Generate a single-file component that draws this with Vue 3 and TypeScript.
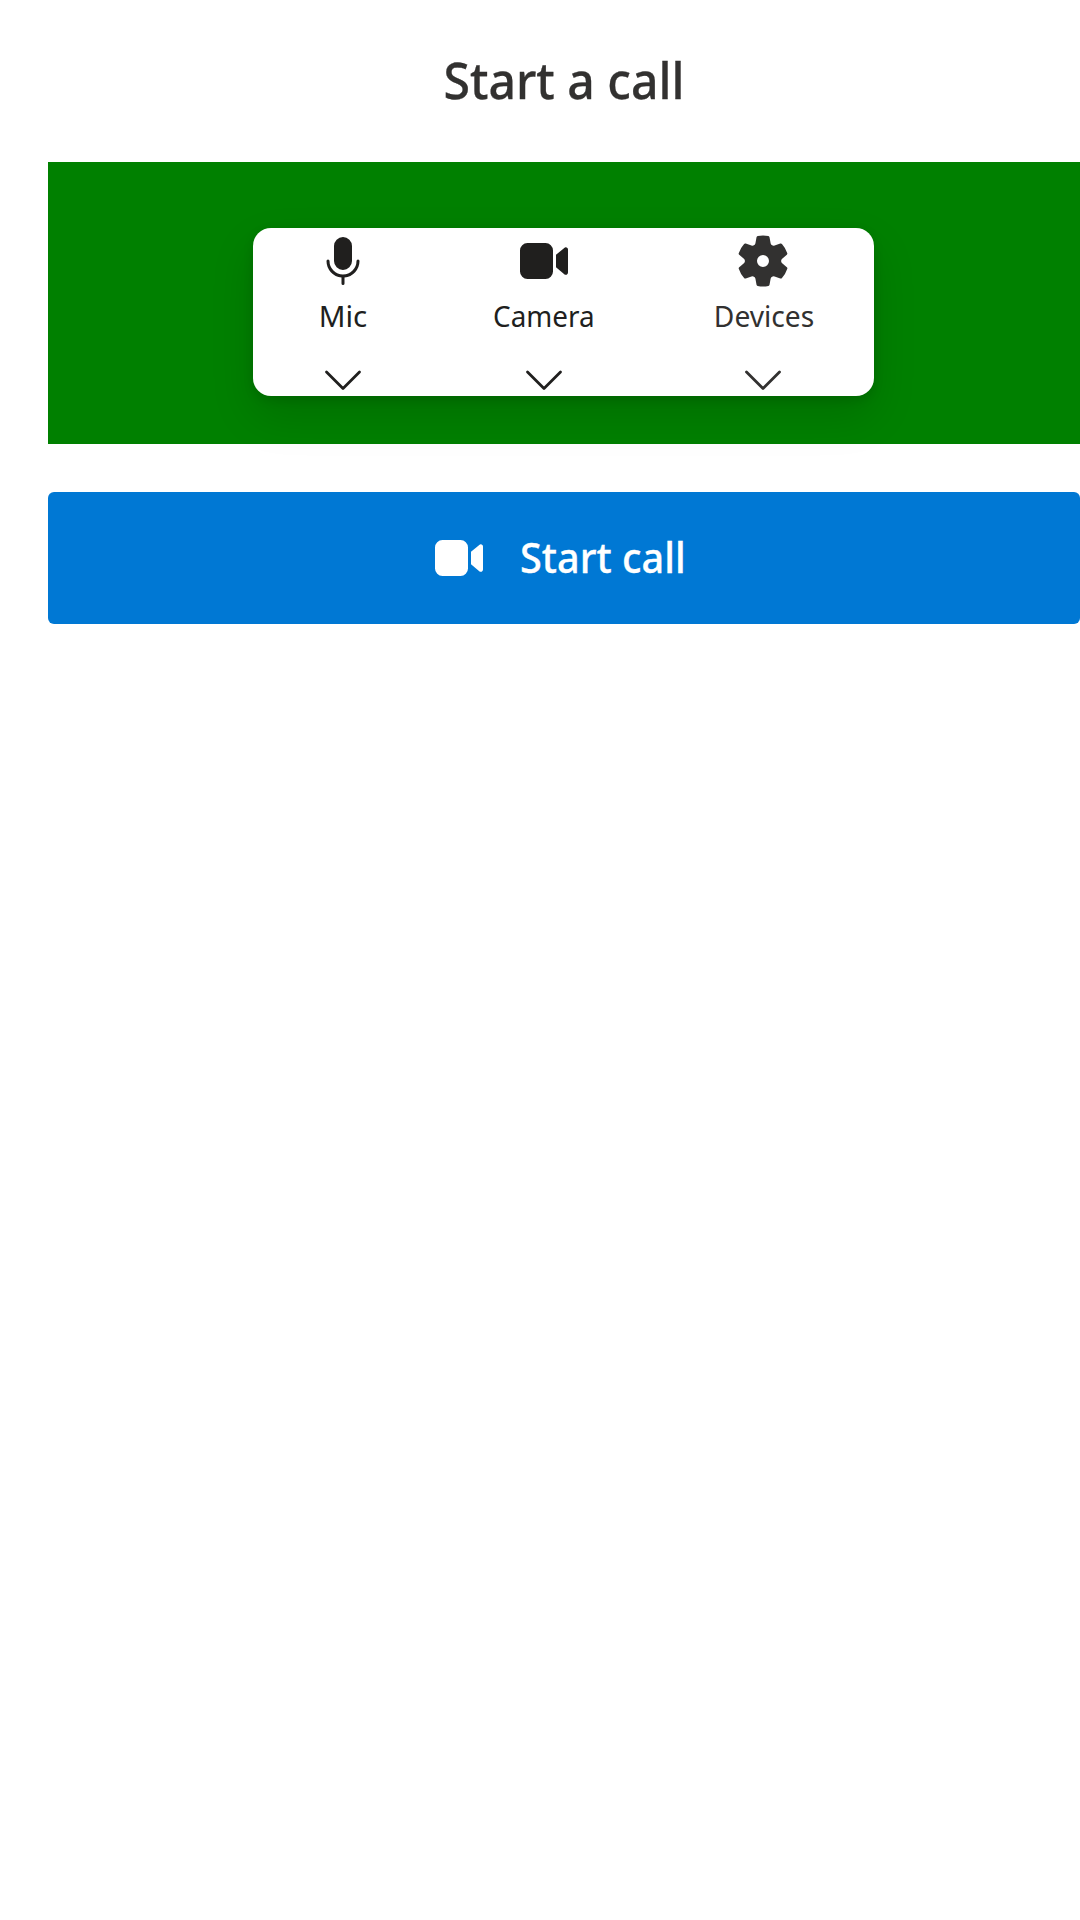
<script setup lang="ts">
interface DeviceControl {
  id: 'mic' | 'camera' | 'devices'
  label: string
}

const controls: DeviceControl[] = [
  { id: 'mic', label: 'Mic' },
  { id: 'camera', label: 'Camera' },
  { id: 'devices', label: 'Devices' },
]

const icons: Record<DeviceControl['id'], string> = {
  mic: 'M10 2a3 3 0 0 1 3 3v5a3 3 0 0 1-6 0V5a3 3 0 0 1 3-3ZM5.5 10a.5.5 0 0 0-1 0 5.5 5.5 0 0 0 5 5.48v2.02a.5.5 0 0 0 1 0v-2.02a5.5 5.5 0 0 0 5-5.48.5.5 0 0 0-1 0 4.5 4.5 0 1 1-9 0Z',
  camera: 'M13 6.5A2.5 2.5 0 0 0 10.5 4h-6A2.5 2.5 0 0 0 2 6.5v7A2.5 2.5 0 0 0 4.5 16h6a2.5 2.5 0 0 0 2.5-2.5v-7ZM14 7.93v4.15l2.76 2.35A.75.75 0 0 0 18 13.86V6.2a.75.75 0 0 0-1.24-.57L14 7.93Z',
  devices: 'M1.91 7.38A8.5 8.5 0 0 1 3.7 4.3a.5.5 0 0 1 .54-.13l1.92.68a1 1 0 0 0 1.32-.76l.36-2a.5.5 0 0 1 .4-.4 8.53 8.53 0 0 1 3.55 0c.2.04.35.2.38.4l.37 2a1 1 0 0 0 1.32.76l1.92-.68a.5.5 0 0 1 .54.13 8.5 8.5 0 0 1 1.78 3.08c.06.2 0 .4-.15.54l-1.56 1.32a1 1 0 0 0 0 1.52l1.56 1.32a.5.5 0 0 1 .15.54 8.5 8.5 0 0 1-1.78 3.08.5.5 0 0 1-.54.13l-1.92-.68a1 1 0 0 0-1.32.76l-.37 2a.5.5 0 0 1-.38.4 8.53 8.53 0 0 1-3.56 0 .5.5 0 0 1-.39-.4l-.36-2a1 1 0 0 0-1.32-.76l-1.92.68a.5.5 0 0 1-.54-.13 8.5 8.5 0 0 1-1.78-3.08.5.5 0 0 1 .15-.54l1.56-1.32a1 1 0 0 0 0-1.52L2.06 7.92a.5.5 0 0 1-.15-.54ZM8 10a2 2 0 1 0 4 0 2 2 0 0 0-4 0Z',
}
</script>

<template>
  <main class="page">
    <h1 class="title">Start a call</h1>
    <section class="preview">
      <div class="bar">
        <button v-for="c in controls" :key="c.id" class="control" :class="c.id" type="button">
          <svg class="icon" viewBox="0 0 20 20"><path :d="icons[c.id]" /></svg>
          <span class="label">{{ c.label }}</span>
          <svg class="chevron" viewBox="0 0 38 22"><path d="M2.5 3 19 19.5 35.5 3" /></svg>
        </button>
      </div>
    </section>
    <button class="start" type="button">
      <svg class="icon" viewBox="0 0 20 20"><path :d="icons.camera" /></svg>
      <span class="start-label">Start call</span>
    </button>
  </main>
</template>

<style>
body {
  background: #fff;
}
</style>

<style scoped>
.page {
  box-sizing: border-box;
  min-height: 1920px;
  padding-left: 48px;
  display: flex;
  flex-direction: column;
  font-family: 'Segoe UI', 'Noto Sans', 'Open Sans', sans-serif;
  color: #323130;
}
button {
  border: 0;
  padding: 0;
  background: none;
  color: inherit;
  font: inherit;
}
.title {
  margin: 0;
  height: 162px;
  line-height: 161px;
  text-align: center;
  font-size: 50px;
  font-weight: 500;
  white-space: nowrap;
  -webkit-text-stroke: 0.3px currentColor;
  transform: scaleX(0.963);
}
.preview {
  height: 282px;
  box-sizing: border-box;
  padding: 66px 0 0 205px;
  background: #008000;
}
.bar {
  width: 621px;
  height: 168px;
  display: flex;
  border-radius: 18px;
  background: #fff;
  box-shadow: 0 19.2px 43.2px rgba(0, 0, 0, 0.132), 0 3.6px 10.8px rgba(0, 0, 0, 0.108);
}
.control {
  display: flex;
  flex-direction: column;
  align-items: center;
  padding-top: 3px;
}
.mic {
  width: 180px;
  color: #201f1e;
}
.camera {
  width: 222px;
  color: #201f1e;
}
.devices {
  width: 216px;
}
.icon {
  width: 60px;
  height: 60px;
  flex: none;
  fill: currentColor;
}
.label {
  height: 48px;
  line-height: 48px;
  margin-top: 1px;
  font-size: 29.5px;
  transform: scaleX(0.943);
}
.mic .label {
  transform: none;
}
.devices .label {
  transform: translateX(1.5px) scaleX(0.955);
}
.chevron {
  width: 38px;
  height: 22px;
  margin-top: 29px;
  fill: none;
  stroke: currentColor;
  stroke-width: 2.8;
  stroke-linecap: round;
  stroke-linejoin: round;
}
.start {
  height: 132px;
  margin-top: 48px;
  display: flex;
  align-items: center;
  justify-content: center;
  gap: 31px;
  border-radius: 6px;
  background: #0078d4;
  color: #fff;
}
.start-label {
  width: 179px;
  font-size: 41px;
  font-weight: 500;
  line-height: 60px;
  text-align: left;
  white-space: nowrap;
  -webkit-text-stroke: 0.3px currentColor;
  transform: translateY(-1px) scaleX(0.968);
  transform-origin: left center;
}
</style>
